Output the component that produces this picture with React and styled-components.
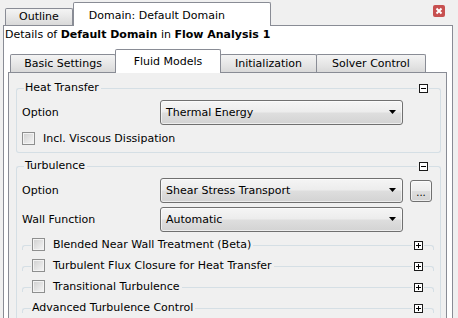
import React from 'react'
import styled, { createGlobalStyle } from 'styled-components'

const edge = '#d5dfe5'
const tabEdge = '#898c95'

const GlobalStyle = createGlobalStyle`
  html, body {
    margin: 0;
    padding: 0;
    background: #f0f0f0;
  }
  body {
    font-family: "DejaVu Sans", Verdana, sans-serif;
    font-size: 11px;
    color: #000;
  }
  * {
    box-sizing: border-box;
  }
`

const Window = styled.div`
  width: 458px;
  height: 318px;
  overflow: hidden;
  background: #f0f0f0;
  display: flex;
  flex-direction: column;
`

const TopBar = styled.div`
  flex: none;
  display: flex;
  align-items: flex-end;
  height: 25px;
  padding-left: 5px;
  position: relative;
  z-index: 1;
`

const TopTab = styled.div`
  display: flex;
  align-items: center;
  height: ${p => (p.$active ? 24 : 17)}px;
  width: ${p => (p.$w ? `${p.$w}px` : 'auto')};
  margin-bottom: ${p => (p.$active ? -1 : 0)}px;
  padding: ${p => (p.$active ? '2px 15px 0' : '0 13px 1px')};
  border: 1px solid ${tabEdge};
  border-bottom: none;
  border-radius: 2px 2px 0 0;
  background: ${p =>
    p.$active ? '#fff' : 'linear-gradient(#f4f4f4, #e6e6e6 55%, #d9d9d9)'};
  white-space: nowrap;
`

const CloseButton = styled.div`
  align-self: flex-start;
  margin: 5px 13px 0 auto;
  width: 12px;
  height: 12px;
  display: flex;
`

const Panel = styled.div`
  flex: 1;
  display: flex;
  flex-direction: column;
  margin: 0 5px 0 3px;
  background: #fff;
  border: 1px solid ${tabEdge};
  border-bottom: none;
  min-height: 0;
`

const Details = styled.div`
  flex: none;
  height: 16px;
  padding: 2px 0 0 1px;
  line-height: 14px;
  white-space: nowrap;

  b {
    font-weight: bold;
  }
`

const TabBar = styled.div`
  flex: none;
  display: flex;
  align-items: flex-end;
  height: 30px;
  padding-left: 6px;
  position: relative;
  z-index: 1;
`

const Tab = styled.div`
  position: relative;
  z-index: ${p => (p.$active ? 2 : 1)};
  display: flex;
  align-items: center;
  justify-content: center;
  width: ${p => p.$w}px;
  height: ${p => (p.$active ? 24 : 18)}px;
  margin-left: -1px;
  margin-bottom: ${p => (p.$active ? -1 : 0)}px;
  padding-bottom: ${p => (p.$active ? 1 : 0)}px;
  border: 1px solid ${tabEdge};
  border-bottom: none;
  border-radius: 2px 2px 0 0;
  background: ${p =>
    p.$active ? '#fff' : 'linear-gradient(#f4f4f4, #e6e6e6 55%, #d9d9d9)'};
  white-space: nowrap;

  &:first-child {
    margin-left: 0;
  }
`

const Sheet = styled.div`
  flex: 1;
  margin: 0 5px 0 4px;
  padding: 8px 5px 0 7px;
  background: #f0f0f0;
  border: 1px solid ${tabEdge};
  border-bottom: none;
`

const Group = styled.section`
  & + & {
    margin-top: 6px;
  }
`

const Head = styled.div`
  display: flex;
  align-items: center;
  height: ${p => p.$h}px;
`

const Corner = styled.span`
  flex: none;
  align-self: flex-start;
  width: ${p => p.$w}px;
  height: ${p => p.$drop}px;
  margin-top: ${p => p.$line}px;
  border-top: 1px solid ${edge};
  ${p =>
    p.$side === 'left'
      ? `border-left: 1px solid ${edge}; border-top-left-radius: 3px;`
      : `border-right: 1px solid ${edge}; border-top-right-radius: 3px;`}
`

const Rule = styled.span`
  flex: 1;
  align-self: flex-start;
  margin: ${p => p.$line}px 2px 0 1px;
  border-top: 1px solid ${edge};
`

const Title = styled.span`
  display: flex;
  align-items: center;
  gap: 8px;
  padding: 0 1px;
  line-height: 14px;
  white-space: nowrap;
`

const Toggle = styled.span`
  flex: none;
  align-self: flex-start;
  display: flex;
  margin: ${p => p.$line - 4}px 1px 0 0;
`

const Body = styled.div`
  border: 1px solid ${edge};
  border-top: none;
  border-radius: 0 0 3px 3px;
  padding: 5px 6px 3px 5px;
`

const Row = styled.div`
  display: flex;
  align-items: center;
  height: ${p => p.$h || 25}px;
  margin-top: ${p => p.$gap || 0}px;
`

const Label = styled.span`
  flex: none;
  width: 138px;
  white-space: nowrap;
`

const Select = styled.div`
  flex: none;
  display: flex;
  align-items: center;
  justify-content: space-between;
  width: 243px;
  height: 25px;
  padding: 0 6px 1px 5px;
  border: 1px solid #707070;
  border-radius: 3px;
  background: linear-gradient(#f5f5f5, #ececec 48%, #dedede 52%, #d3d3d3);
  box-shadow: inset 0 0 0 1px rgba(255, 255, 255, 0.6);
  white-space: nowrap;
`

const MoreButton = styled.div`
  flex: none;
  width: 22px;
  height: 22px;
  margin-left: 7px;
  display: flex;
  align-items: flex-end;
  justify-content: center;
  padding-bottom: 3px;
  line-height: 11px;
  font-size: 10px;
  border: 1px solid #707070;
  border-radius: 3px;
  background: linear-gradient(#f5f5f5, #ececec 48%, #dedede 52%, #d3d3d3);
  box-shadow: inset 0 0 0 1px rgba(255, 255, 255, 0.6);
`

const Check = styled.span`
  flex: none;
  width: 13px;
  height: 13px;
  border: 1px solid #8e8f8f;
  background: linear-gradient(135deg, #cfcfcf, #f6f6f6);
  box-shadow: inset 0 0 0 1px #f3f3f3;
`

const CheckRow = styled.label`
  display: flex;
  align-items: center;
  gap: 8px;
  height: 21px;
  margin-top: 3px;
  white-space: nowrap;
`

const SubList = styled.div`
  margin-top: 2px;
`

const Arrow = () => (
  <svg width="7" height="4" viewBox="0 0 7 4">
    <path d="M0 0h7L3.5 4z" fill="#000" />
  </svg>
)

const PlusMinus = ({ plus }) => (
  <svg width="9" height="9" viewBox="0 0 9 9">
    <rect x="0.5" y="0.5" width="8" height="8" fill="#fff" stroke="#1a1a1a" />
    <path d="M2 4.5h5" stroke="#000" />
    {plus && <path d="M4.5 2v5" stroke="#000" />}
  </svg>
)

const GroupHead = ({ collapsed, children }) => {
  const h = collapsed ? 21 : 14
  const line = collapsed ? 11 : 7
  const drop = collapsed ? 5 : h - line
  return (
    <Head $h={h}>
      <Corner $side="left" $w={collapsed ? 9 : 8} $line={line} $drop={drop} />
      <Title>{children}</Title>
      <Rule $line={line} />
      <Toggle $line={line}>
        <PlusMinus plus={collapsed} />
      </Toggle>
      <Corner $side="right" $w={collapsed ? 10 : 12} $line={line} $drop={drop} />
    </Head>
  )
}

const Dropdown = ({ value }) => (
  <Select>
    <span>{value}</span>
    <Arrow />
  </Select>
)

const subGroups = [
  { text: 'Blended Near Wall Treatment (Beta)', check: true },
  { text: 'Turbulent Flux Closure for Heat Transfer', check: true },
  { text: 'Transitional Turbulence', check: true },
  { text: 'Advanced Turbulence Control', check: false },
]

export default function App() {
  return (
    <Window>
      <GlobalStyle />
      <TopBar>
        <TopTab>Outline</TopTab>
        <TopTab $active $w={198}>Domain: Default Domain</TopTab>
        <CloseButton>
          <svg width="12" height="12" viewBox="0 0 12 12">
            <rect width="12" height="12" rx="2" fill="#c75050" />
            <path d="M3.5 3.5l5 5M8.5 3.5l-5 5" stroke="#fff" strokeWidth="2" />
          </svg>
        </CloseButton>
      </TopBar>
      <Panel>
        <Details>
          Details of <b>Default Domain</b> in <b>Flow Analysis 1</b>
        </Details>
        <TabBar>
          <Tab $w={106}>Basic Settings</Tab>
          <Tab $w={106} $active>Fluid Models</Tab>
          <Tab $w={97}>Initialization</Tab>
          <Tab $w={110}>Solver Control</Tab>
        </TabBar>
        <Sheet>
          <Group>
            <GroupHead>Heat Transfer</GroupHead>
            <Body>
              <Row>
                <Label>Option</Label>
                <Dropdown value="Thermal Energy" />
              </Row>
              <CheckRow>
                <Check />
                Incl. Viscous Dissipation
              </CheckRow>
            </Body>
          </Group>
          <Group>
            <GroupHead>Turbulence</GroupHead>
            <Body>
              <Row>
                <Label>Option</Label>
                <Dropdown value="Shear Stress Transport" />
                <MoreButton>...</MoreButton>
              </Row>
              <Row $gap={4}>
                <Label>Wall Function</Label>
                <Dropdown value="Automatic" />
              </Row>
              <SubList>
                {subGroups.map(g => (
                  <GroupHead key={g.text} collapsed>
                    {g.check && <Check />}
                    {g.text}
                  </GroupHead>
                ))}
              </SubList>
            </Body>
          </Group>
        </Sheet>
      </Panel>
    </Window>
  )
}
